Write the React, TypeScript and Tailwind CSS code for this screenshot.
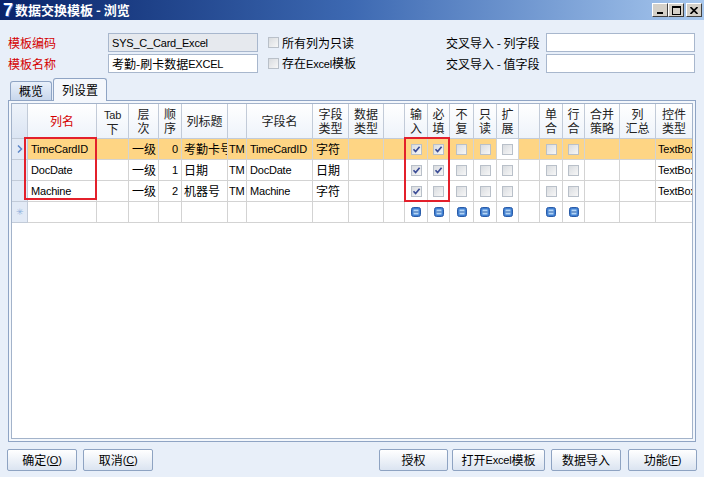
import React from "react";

type Col = { w: number; head: string[]; red?: boolean; kind?: "text" | "num" | "cb"; pad?: string };

const cols: Col[] = [
  { w: 69, head: ["列名"], red: true, pad: "pl-[3px]" },
  { w: 32, head: ["Tab", "下"] },
  { w: 30, head: ["层", "次"], pad: "pl-[3px]" },
  { w: 23, head: ["顺", "序"], kind: "num" },
  { w: 46, head: ["列标题"], pad: "pl-[2px]" },
  { w: 19, head: [""], pad: "pl-[1px]" },
  { w: 66, head: ["字段名"], pad: "pl-[3px]" },
  { w: 36, head: ["字段", "类型"], pad: "pl-[3px]" },
  { w: 35, head: ["数据", "类型"] },
  { w: 21, head: [""] },
  { w: 23, head: ["输", "入"], kind: "cb" },
  { w: 22, head: ["必", "填"], kind: "cb" },
  { w: 24, head: ["不", "复"], kind: "cb" },
  { w: 23, head: ["只", "读"], kind: "cb" },
  { w: 22, head: ["扩", "展"], kind: "cb" },
  { w: 21, head: [""] },
  { w: 23, head: ["单", "合"], kind: "cb" },
  { w: 22, head: ["行", "合"], kind: "cb" },
  { w: 35, head: ["合并", "策略"] },
  { w: 36, head: ["列", "汇总"] },
  { w: 37, head: ["控件", "类型"], pad: "pl-[2px]" },
];

type Cell = string | boolean | null;

const rows: Cell[][] = [
  ["TimeCardID", null, "一级", "0", "考勤卡号", "TM", "TimeCardID", "字符", null, null, true, true, false, false, false, null, false, false, null, null, "TextBox"],
  ["DocDate", null, "一级", "1", "日期", "TM", "DocDate", "日期", null, null, true, true, false, false, false, null, false, false, null, null, "TextBox"],
  ["Machine", null, "一级", "2", "机器号", "TM", "Machine", "字符", null, null, true, false, false, false, false, null, false, false, null, null, "TextBox"],
];

// Latin text in the original is a narrow Windows face; Liberation Sans 11px is closest
function L({ children }: { children: React.ReactNode }) {
  return <span className="font-['Liberation_Sans',sans-serif] text-[11px] tracking-[-0.2px]">{children}</span>;
}

const isLatin = (s: string) => /^[\x00-\x7f]+$/.test(s);

function Check({ on }: { on: boolean }) {
  return (
    <div className="w-[11px] h-[11px] border border-[#b9c0c9] bg-linear-to-br from-[#d9dce0] to-[#f7f7f7] flex items-center justify-center">
      {on && (
        <svg width="9" height="9" viewBox="0 0 9 9">
          <path d="M1.5 4.2 L3.6 6.5 L7.6 1.8" fill="none" stroke="#3a4b96" strokeWidth="1.7" />
        </svg>
      )}
    </div>
  );
}

function NewIcon() {
  return (
    <svg width="10" height="10" viewBox="0 0 10 10">
      <rect x="0.5" y="0.5" width="9" height="9" rx="2" fill="#3f7fd2" stroke="#2a5ca8" />
      <rect x="2.5" y="2.5" width="5" height="5" fill="#b4d6f6" />
      <line x1="2.5" y1="5" x2="7.5" y2="5" stroke="#2a5ca8" strokeWidth="1" />
    </svg>
  );
}

function WinBtn({ children }: { children: React.ReactNode }) {
  return (
    <div className="w-[16px] h-[14px] bg-[#d4d0c8] border border-t-white border-l-white border-r-[#404040] border-b-[#404040] flex items-center justify-center">
      {children}
    </div>
  );
}

function TitleBar() {
  return (
    <div className="h-[20px] shrink-0 flex items-center bg-linear-to-r from-[#0a246a] via-[#3d69b2] to-[#a8c8ee] pl-[3px] pr-[2px]">
      <span className="font-['Liberation_Sans',sans-serif] font-bold text-[18px] leading-[18px] text-white [text-shadow:1px_1px_0_#2f6fd6]">
        7
      </span>
      <span className="ml-[2px] font-bold text-[13px] leading-[16px] text-white">数据交换模板 - 浏览</span>
      <div className="ml-auto flex items-center">
        <WinBtn>
          <svg width="8" height="8" viewBox="0 0 8 8">
            <rect x="1" y="6" width="6" height="2" fill="#000" />
          </svg>
        </WinBtn>
        <WinBtn>
          <svg width="9" height="9" viewBox="0 0 9 9">
            <rect x="0.5" y="0.5" width="8" height="8" fill="none" stroke="#000" />
            <rect x="0" y="0" width="9" height="2" fill="#000" />
          </svg>
        </WinBtn>
        <div className="w-[2px]" />
        <WinBtn>
          <svg width="8" height="7" viewBox="0 0 8 7">
            <path d="M0.5 0 L7.5 7 M7.5 0 L0.5 7" stroke="#000" strokeWidth="1.6" />
          </svg>
        </WinBtn>
      </div>
    </div>
  );
}

function FormRow({ label, value, readOnly, check, right }: { label: string; value: React.ReactNode; readOnly?: boolean; check: React.ReactNode; right: string }) {
  return (
    <div className="flex items-center h-[19px]">
      <div className="w-[100px] text-[#d40000]">{label}</div>
      <div
        className={`w-[150px] h-[19px] border border-[#a8b7cd] px-[3px] flex items-center ${
          readOnly ? "bg-[#e6e9ee]" : "bg-white"
        }`}
      >
        {value}
      </div>
      <div className="w-[187px] pl-[10px] flex items-center gap-[3px]">
        <Check on={false} />
        <span>{check}</span>
      </div>
      <div className="w-[101px] pl-[1px]">{right}</div>
      <div className="w-[149px] h-[19px] border border-[#a8b7cd] bg-white" />
    </div>
  );
}

function Tabs() {
  return (
    <div className="mt-[5px] h-[22px] shrink-0 flex items-end pl-[10px] gap-[1px]">
      <div className="w-[42px] h-[19px] border border-b-0 border-[#8fa4c4] rounded-t-[3px] bg-linear-to-b from-[#e9f0fa] to-[#c8d7ec] flex items-center justify-center">
        概览
      </div>
      <div className="relative z-10 -mb-[1px] w-[54px] h-[23px] border border-b-0 border-[#8fa4c4] rounded-t-[3px] bg-[#f4f7fc] flex items-center justify-center">
        列设置
      </div>
    </div>
  );
}

function Grid() {
  return (
    <div className="h-full border border-[#a3b3ca] bg-white overflow-hidden">
      <div className="w-[700px]">
        {/* header */}
        <div className="flex h-[35px]">
          <div className="w-[16px] shrink-0 border-r border-b border-[#c2cbd8] bg-linear-to-b from-[#eef3fa] to-[#dbe5f3]" />
          {cols.map((c, i) => (
            <div
              key={i}
              style={{ width: c.w }}
              className={`shrink-0 border-r border-b border-[#c2cbd8] bg-linear-to-b from-white to-[#eef3fa] flex flex-col items-center justify-center leading-[14px] ${
                c.red ? "text-[#d40000]" : "text-[#222]"
              }`}
            >
              {c.head.map((t, j) => (
                <span key={j}>{isLatin(t) && t ? <L>{t}</L> : t}</span>
              ))}
            </div>
          ))}
        </div>
        {/* rows */}
        {rows.map((r, ri) => {
          const sel = ri === 0;
          return (
            <div key={ri} className="flex h-[21px]">
              <div className="w-[16px] shrink-0 border-r border-b border-[#c2cbd8] bg-[#e2eaf6] flex items-center justify-center">
                {sel && (
                  <svg width="6" height="8" viewBox="0 0 6 8">
                    <path d="M1 0.5 L4.5 4 L1 7.5" fill="none" stroke="#5b86c8" strokeWidth="1.5" />
                  </svg>
                )}
              </div>
              {cols.map((c, ci) => {
                const v = r[ci];
                const bg = sel && ci !== 14 ? "bg-[#fed584]" : "bg-white";
                return (
                  <div
                    key={ci}
                    style={{ width: c.w }}
                    className={`shrink-0 border-r border-b border-[#d3d3d3] ${bg} flex items-center overflow-hidden whitespace-nowrap ${
                      c.kind === "cb" ? "justify-center" : c.kind === "num" ? "justify-end pr-[3px]" : c.pad ?? ""
                    }`}
                  >
                    {typeof v === "boolean" ? <Check on={v} /> : typeof v === "string" && isLatin(v) ? <L>{v}</L> : v}
                  </div>
                );
              })}
            </div>
          );
        })}
        {/* new row */}
        <div className="flex h-[21px]">
          <div className="w-[16px] shrink-0 border-r border-b border-[#c2cbd8] bg-[#e2eaf6] flex items-center justify-center text-[9px] text-[#8fb0dc]">
            ✳
          </div>
          {cols.map((c, ci) => (
            <div
              key={ci}
              style={{ width: c.w }}
              className="shrink-0 border-r border-b border-[#d3d3d3] bg-white flex items-center justify-center"
            >
              {c.kind === "cb" && <NewIcon />}
            </div>
          ))}
        </div>
      </div>
    </div>
  );
}

function Btn({ w, children }: { w: string; children: React.ReactNode }) {
  return (
    <div
      className={`${w} h-[22px] border border-[#8ea3c2] rounded-[2px] bg-linear-to-b from-white to-[#dbe4f1] flex items-center justify-center`}
    >
      {children}
    </div>
  );
}

export default function App() {
  return (
    <div className="relative w-[704px] h-[477px] overflow-hidden bg-[#e8eff9] font-['Noto_Sans_CJK_SC','Liberation_Sans',sans-serif] text-[12px] leading-[14px] text-black flex flex-col">
      <TitleBar />
      <div className="mt-[13px] flex flex-col gap-[2px] pl-[8px]">
        <FormRow label="模板编码" value={<L>SYS_C_Card_Excel</L>} readOnly check="所有列为只读" right="交叉导入 - 列字段" />
        <FormRow
          label="模板名称"
          value={
            <>
              考勤-刷卡数据<L>EXCEL</L>
            </>
          }
          check={
            <>
              存在<L>Excel</L>模板
            </>
          }
          right="交叉导入 - 值字段"
        />
      </div>
      <Tabs />
      <div className="mx-[8px] h-[342px] shrink-0 border border-[#8fa4c4] bg-[#f3f7fc] p-[2px]">
        <Grid />
      </div>
      <div className="mt-[7px] px-[7px] flex justify-between">
        <div className="flex gap-[6px]">
          <Btn w="w-[70px]">
            确定<L>(<span className="underline">O</span>)</L>
          </Btn>
          <Btn w="w-[70px]">
            取消<L>(<span className="underline">C</span>)</L>
          </Btn>
        </div>
        <div className="flex">
          <Btn w="w-[69px]">授权</Btn>
          <div className="w-[4px]" />
          <Btn w="w-[93px]">
            打开<L>Excel</L>模板
          </Btn>
          <div className="w-[6px]" />
          <Btn w="w-[70px]">数据导入</Btn>
          <div className="w-[7px]" />
          <Btn w="w-[69px]">
            功能<L>(<span className="underline">F</span>)</L>
          </Btn>
        </div>
      </div>
      {/* red annotation boxes */}
      <div className="absolute left-[24px] top-[137px] w-[73px] h-[63px] border-2 border-[#e3202b]" />
      <div className="absolute left-[404px] top-[137px] w-[46px] h-[65px] border-2 border-[#e3202b]" />
    </div>
  );
}
